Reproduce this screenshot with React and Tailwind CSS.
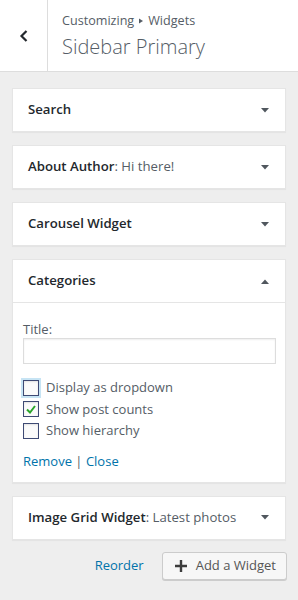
import React from "react";

const font = { fontFamily: '"Open Sans", "Liberation Sans", sans-serif' };

function Arrow({ up }) {
	return (
		<svg width="8" height="5" viewBox="0 0 8 5" className="shrink-0">
			{up ? (
				<path d="M0 5 L4 0.5 L8 5 Z" fill="#50575e" />
			) : (
				<path d="M0 0 L8 0 L4 4.5 Z" fill="#50575e" />
			)}
		</svg>
	);
}

function WidgetHead({ title, sub, up }) {
	return (
		<div className="h-[42px] flex items-center justify-between pl-[15px] pr-[16px]">
			<div className="text-[13.2px] font-semibold text-[#23282d] leading-none">
				{title}
				{sub && <span className="font-normal text-[#555d66]">: {sub}</span>}
			</div>
			<Arrow up={up} />
		</div>
	);
}

function Box({ checked, focus, label }) {
	return (
		<label className="flex items-center gap-[7px] h-[21.5px] text-[13px] text-[#555d66]">
			<span
				className={`w-[16px] h-[16px] border border-[#3e4a74] bg-[#fbfbfb] flex items-center justify-center shadow-[inset_0_1px_2px_rgba(0,0,0,0.1)] ${
					focus ? "ring-2 ring-[#c7e4f4]" : ""
				}`}
			>
				{checked && (
					<svg width="10" height="9" viewBox="0 0 10 9">
						<path d="M1 4.5 L4 7.5 L9 1" stroke="#2aa52a" strokeWidth="2" fill="none" />
					</svg>
				)}
			</span>
			{label}
		</label>
	);
}

export default function App() {
	return (
		<div style={font} className="w-[298px] h-[600px] bg-[#eeeeee] overflow-hidden">
			<div className="h-[72px] bg-white border-b border-[#dddddd] flex">
				<div className="w-[48px] border-r border-[#dddddd] flex items-center justify-center">
					<svg width="10" height="14" viewBox="0 0 10 14">
						<path d="M7.5 2 L2.5 7 L7.5 12" stroke="#23282d" strokeWidth="2.2" fill="none" />
					</svg>
				</div>
				<div className="pl-[14px] pt-[12px]">
					<div className="text-[12.6px] text-[#555d66] leading-[18px] flex items-center">
						Customizing
						<svg width="6" height="8" viewBox="0 0 6 8" className="mx-[4px]">
							<path d="M1 1.5 L5 4 L1 6.5 Z" fill="#555d66" />
						</svg>
						Widgets
					</div>
					<div className="text-[20px] font-light text-[#555d66] leading-[28px] mt-[3px]">
						Sidebar Primary
					</div>
				</div>
			</div>

			<div className="px-[12px] pt-[16px] flex flex-col gap-[13px]">
				<div className="bg-white border border-[#e5e5e5] shadow-[0_1px_1px_rgba(0,0,0,0.04)]">
					<WidgetHead title="Search" />
				</div>
				<div className="bg-white border border-[#e5e5e5] shadow-[0_1px_1px_rgba(0,0,0,0.04)]">
					<WidgetHead title="About Author" sub="Hi there!" />
				</div>
				<div className="bg-white border border-[#e5e5e5] shadow-[0_1px_1px_rgba(0,0,0,0.04)]">
					<WidgetHead title="Carousel Widget" />
				</div>
				<div className="bg-white border border-[#e5e5e5] shadow-[0_1px_1px_rgba(0,0,0,0.04)]">
					<WidgetHead title="Categories" up />
					<div className="border-t border-[#e5e5e5] pl-[10px] pr-[9px] pt-[17px] pb-[12px]">
						<div className="text-[13px] text-[#555d66] leading-[18px]">Title:</div>
						<div className="h-[26px] border border-[#dddddd] shadow-[inset_0_1px_2px_rgba(0,0,0,0.07)]" />
						<div className="mt-[13px] flex flex-col">
							<Box focus label="Display as dropdown" />
							<Box checked label="Show post counts" />
							<Box label="Show hierarchy" />
						</div>
						<div className="mt-[10px] text-[13px] leading-[18px] text-[#0073aa]">
							Remove <span className="text-[#555d66]">|</span> Close
						</div>
					</div>
				</div>
				<div className="bg-white border border-[#e5e5e5] shadow-[0_1px_1px_rgba(0,0,0,0.04)]">
					<WidgetHead title="Image Grid Widget" sub="Latest photos" />
				</div>
			</div>

			<div className="px-[11px] mt-[12px] flex items-center justify-end gap-[18px]">
				<span className="text-[13px] text-[#0073aa]">Reorder</span>
				<button className="h-[28px] pl-[12px] pr-[10px] flex items-center gap-[9px] bg-[#f7f7f7] border border-[#cccccc] rounded-[3px] shadow-[0_1px_0_#cccccc] text-[13px] text-[#555555]">
					<svg width="12" height="12" viewBox="0 0 12 12">
						<path d="M6 0 V12 M0 6 H12" stroke="#3c3c3c" strokeWidth="2.4" />
					</svg>
					Add a Widget
				</button>
			</div>
		</div>
	);
}
